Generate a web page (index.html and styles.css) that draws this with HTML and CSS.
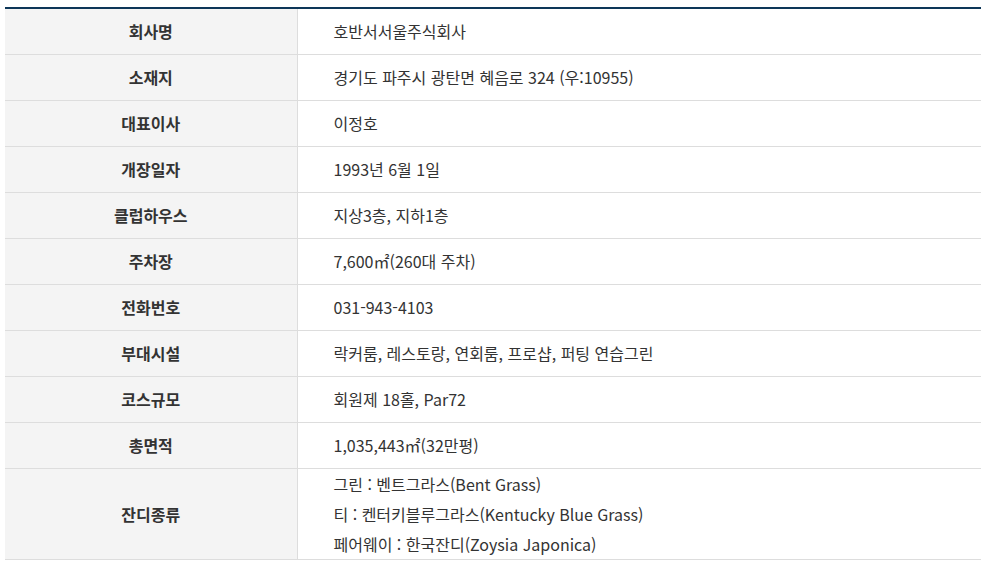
FILE: index.html
```html
<!DOCTYPE html>
<html lang="ko">
<head>
<meta charset="utf-8">
<link rel="stylesheet" href="styles.css">
</head>
<body>
<div class="wrap">
<table class="info">
<colgroup><col class="c-head"><col></colgroup>
<tbody>
<tr><th>회사명</th><td>호반서서울주식회사</td></tr>
<tr><th>소재지</th><td>경기도 파주시 광탄면 혜음로 324 (우:10955)</td></tr>
<tr><th>대표이사</th><td>이정호</td></tr>
<tr><th>개장일자</th><td>1993년 6월 1일</td></tr>
<tr><th>클럽하우스</th><td>지상3층, 지하1층</td></tr>
<tr><th>주차장</th><td>7,600㎡(260대 주차)</td></tr>
<tr><th>전화번호</th><td>031-943-4103</td></tr>
<tr><th>부대시설</th><td>락커룸, 레스토랑, 연회룸, 프로샵, 퍼팅 연습그린</td></tr>
<tr><th>코스규모</th><td>회원제 18홀, Par72</td></tr>
<tr><th>총면적</th><td>1,035,443㎡(32만평)</td></tr>
<tr class="multi"><th>잔디종류</th><td>
<p>그린 : 벤트그라스(Bent Grass)</p>
<p>티 : 켄터키블루그라스(Kentucky Blue Grass)</p>
<p>페어웨이 : 한국잔디(Zoysia Japonica)</p>
</td></tr>
</tbody>
</table>
</div>
</body>
</html>
```

FILE: styles.css
```css
html, body {
  margin: 0;
  padding: 0;
  background: #fff;
}
.wrap {
  padding: 7px 7px 0 5px;
}
.info {
  width: 976px;
  border-collapse: collapse;
  border-top: 2px solid #0d3658;
  font-family: "Noto Sans CJK KR", "Noto Sans", sans-serif;
  font-size: 16px;
  table-layout: fixed;
}
.c-head {
  width: 292px;
}
.info th,
.info td {
  height: 44px;
  padding: 0 0 1px 0;
  border-bottom: 1px solid #dddddd;
  vertical-align: middle;
  line-height: 20px;
}
.info th {
  background: #f4f4f4;
  color: #333;
  font-weight: 700;
  text-align: center;
  border-right: 1px solid #dddddd;
}
.info td {
  color: #333;
  text-align: left;
  padding-left: 36px;
}
.multi th {
  padding-bottom: 0;
}
.multi td {
  padding-bottom: 0;
}
.multi td p {
  margin: 0;
  line-height: 30px;
}
```
